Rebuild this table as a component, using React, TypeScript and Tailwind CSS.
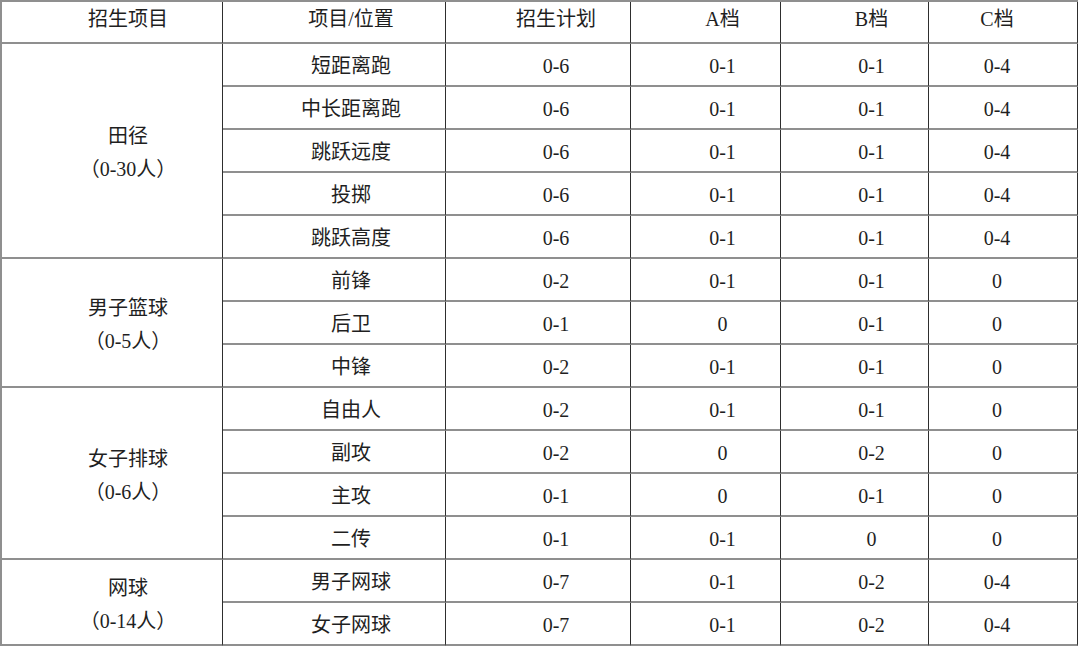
import React from "react"

type Row = { pos: string; plan: string; a: string; b: string; c: string }

interface Group {
  name: string
  quota: string
  rows: Row[]
}

const groups: Group[] = [
  {
    name: "田径",
    quota: "（0-30人）",
    rows: [
      { pos: "短距离跑", plan: "0-6", a: "0-1", b: "0-1", c: "0-4" },
      { pos: "中长距离跑", plan: "0-6", a: "0-1", b: "0-1", c: "0-4" },
      { pos: "跳跃远度", plan: "0-6", a: "0-1", b: "0-1", c: "0-4" },
      { pos: "投掷", plan: "0-6", a: "0-1", b: "0-1", c: "0-4" },
      { pos: "跳跃高度", plan: "0-6", a: "0-1", b: "0-1", c: "0-4" },
    ],
  },
  {
    name: "男子篮球",
    quota: "（0-5人）",
    rows: [
      { pos: "前锋", plan: "0-2", a: "0-1", b: "0-1", c: "0" },
      { pos: "后卫", plan: "0-1", a: "0", b: "0-1", c: "0" },
      { pos: "中锋", plan: "0-2", a: "0-1", b: "0-1", c: "0" },
    ],
  },
  {
    name: "女子排球",
    quota: "（0-6人）",
    rows: [
      { pos: "自由人", plan: "0-2", a: "0-1", b: "0-1", c: "0" },
      { pos: "副攻", plan: "0-2", a: "0", b: "0-2", c: "0" },
      { pos: "主攻", plan: "0-1", a: "0", b: "0-1", c: "0" },
      { pos: "二传", plan: "0-1", a: "0-1", b: "0", c: "0" },
    ],
  },
  {
    name: "网球",
    quota: "（0-14人）",
    rows: [
      { pos: "男子网球", plan: "0-7", a: "0-1", b: "0-2", c: "0-4" },
      { pos: "女子网球", plan: "0-7", a: "0-1", b: "0-2", c: "0-4" },
    ],
  },
]

const headers = ["招生项目", "项目/位置", "招生计划", "A档", "B档", "C档"]
const widths = ["w-[221px]", "w-[223px]", "w-[185px]", "w-[150px]", "w-[148px]", "w-[149px]"]
// text in the source sits a little right of centre, except in the last column
const shifts = ["pl-[32px]", "pl-[34px]", "pl-[36px]", "pl-[34px]", "pl-[34px]", "pr-[12px]"]

const cell = "border-b-2 border-b-[#8f8f8f] border-r border-r-[#2e2e2e] text-center align-middle"

export default function App() {
  return (
    <div className="w-[1080px] h-[650px] bg-white overflow-hidden">
      <table
        className="border-separate border-spacing-0 table-fixed border-t-2 border-l-2 border-t-[#8f8f8f] border-l-[#8f8f8f] text-[20px] text-[#1f1f1f] leading-none"
        style={{ fontFamily: '"Liberation Serif", "Noto Sans CJK SC", serif' }}
      >
        <thead>
          <tr className="h-[42px]">
            {headers.map((h, i) => (
              <th key={h} className={`${cell} ${widths[i]} ${shifts[i]} font-normal pb-[6px]`}>
                {h}
              </th>
            ))}
          </tr>
        </thead>
        <tbody>
          {groups.map((g, gi) =>
            g.rows.map((r, ri) => {
              const last = gi === groups.length - 1 && ri === g.rows.length - 1
              const c = last ? `${cell} border-b-[#3a3a3a] pt-[3px]` : `${cell} pt-[3px]`
              const vals = [r.pos, r.plan, r.a, r.b, r.c]
              return (
                <tr key={g.name + r.pos} className="h-[43px]">
                  {ri === 0 && (
                    <td
                      rowSpan={g.rows.length}
                      className={`${cell} ${shifts[0]} pt-[4px] ${gi === groups.length - 1 ? "border-b-[#3a3a3a]" : ""}`}
                    >
                      <div className="flex flex-col items-center gap-[13px]">
                        <span>{g.name}</span>
                        <span>{g.quota}</span>
                      </div>
                    </td>
                  )}
                  {vals.map((v, i) => (
                    <td key={i} className={`${c} ${shifts[i + 1]}`}>
                      {v}
                    </td>
                  ))}
                </tr>
              )
            })
          )}
        </tbody>
      </table>
    </div>
  )
}
